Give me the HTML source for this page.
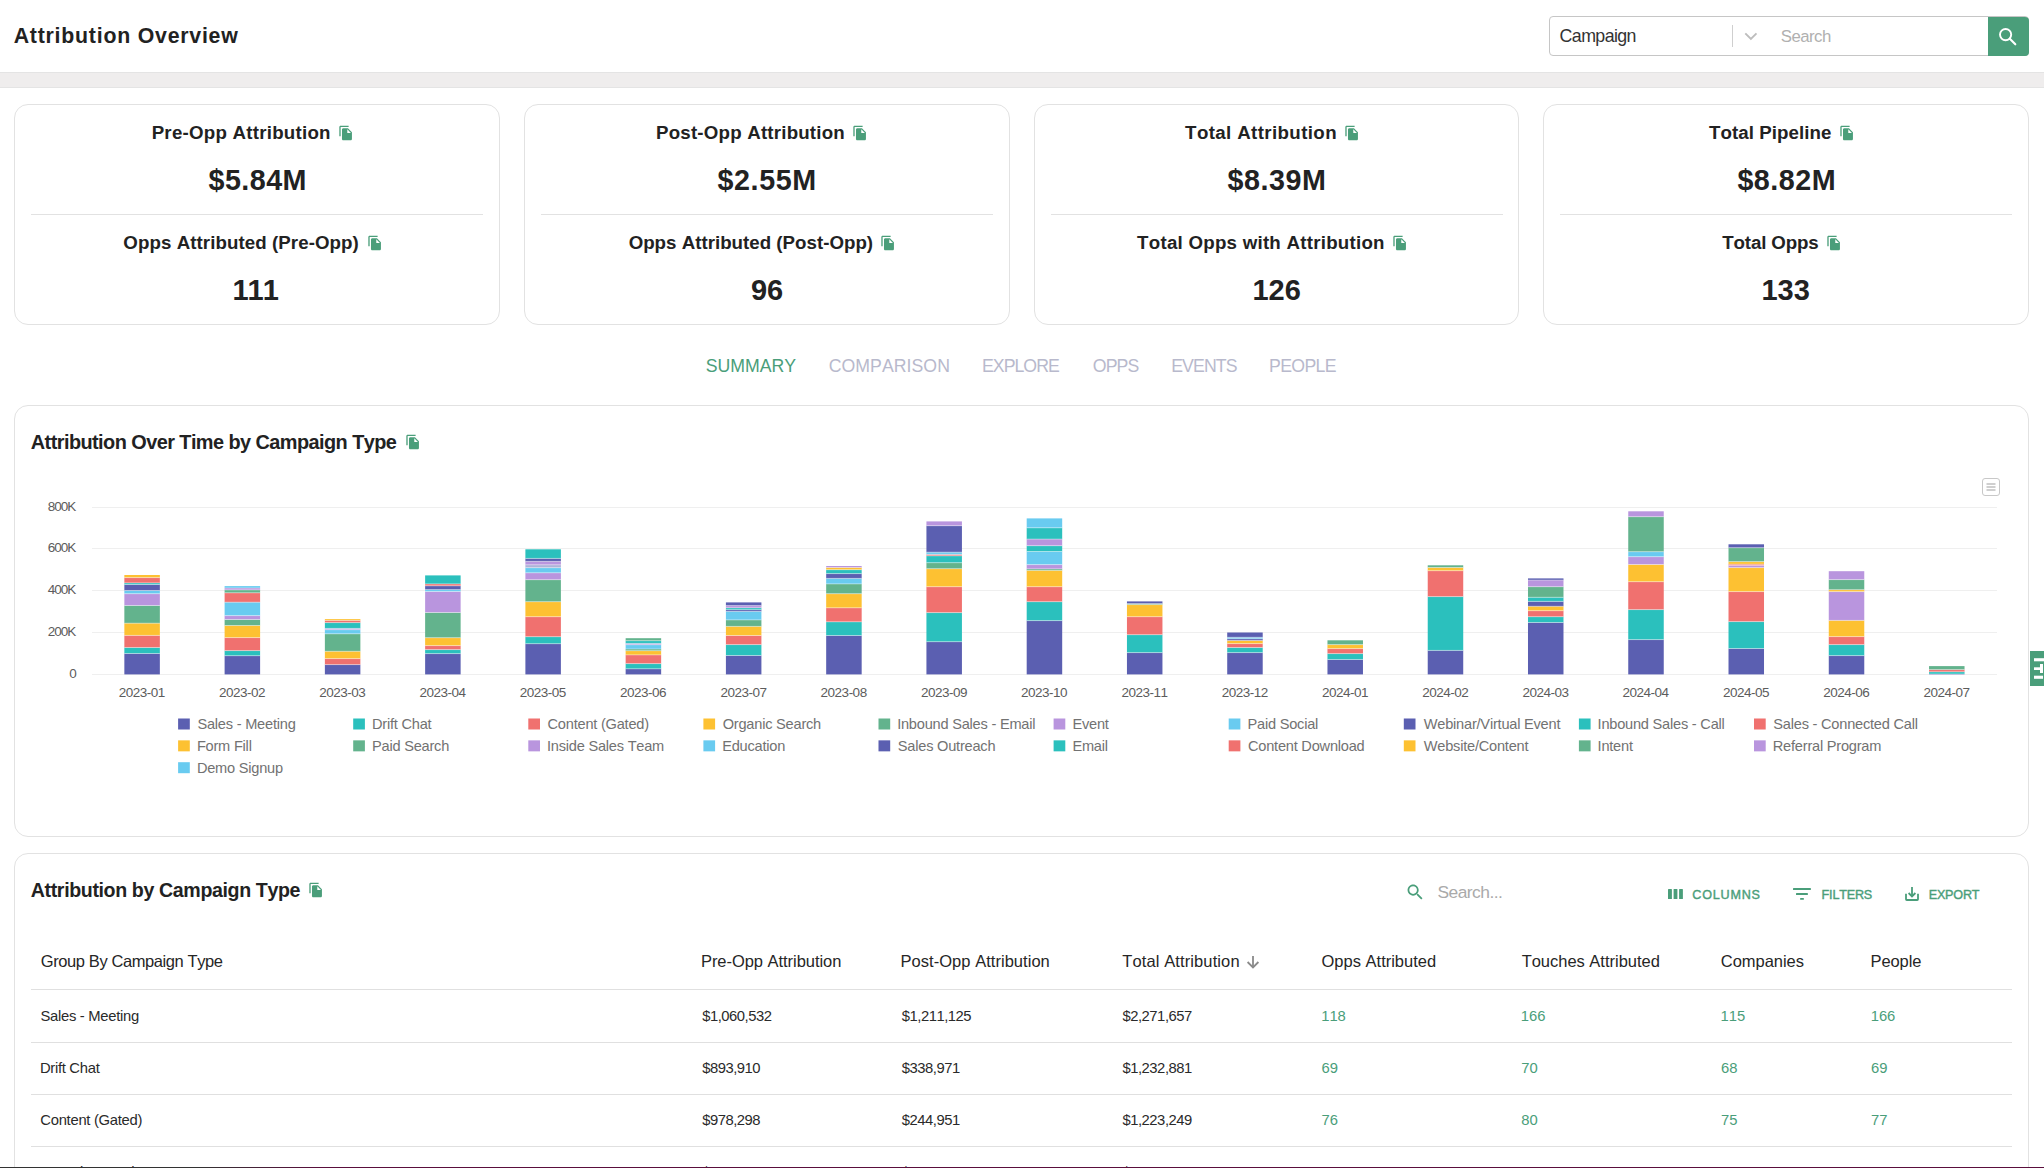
<!DOCTYPE html>
<html><head><meta charset="utf-8">
<style>
*{box-sizing:border-box;margin:0;padding:0}
html,body{width:2044px;height:1168px;overflow:hidden;background:#fff;font-family:"Liberation Sans",sans-serif;color:#222}
.t{position:absolute;line-height:0;white-space:nowrap;font-kerning:none}
.a{position:absolute;display:block}
.card{position:absolute;top:104px;width:486px;height:221px;border:1px solid #e2e2e2;border-radius:14px;background:#fff}
.div{position:absolute;top:214px;height:1px;background:#e2e2e2}
</style></head><body>
<div class="a" style="left:0;top:72px;width:2044px;height:16px;background:#efeded;border-top:1px solid #e4e4e4;border-bottom:1px solid #e4e4e4"></div>
<div class="t" style="left:13.67px;top:36.25px;font-size:21.3px;font-weight:bold;color:#222;letter-spacing:0.774px;">Attribution Overview</div>
<div class="a" style="left:1549px;top:16px;width:480px;height:40px;border:1px solid #c6c6c6;border-radius:4px;background:#fff"></div>
<div class="t" style="left:1559.60px;top:36.07px;font-size:17.8px;font-weight:normal;color:#333;letter-spacing:-0.596px;">Campaign</div>
<div class="a" style="left:1732px;top:25px;width:1px;height:21.5px;background:#cfcfcf"></div>
<svg class="a" style="left:1743px;top:31px" width="16" height="11" viewBox="0 0 16 11"><path d="M2.3 2.3 L7.9 7.9 L13.5 2.3" fill="none" stroke="#bdbdbd" stroke-width="1.9"/></svg>
<div class="t" style="left:1780.74px;top:37.02px;font-size:16.8px;font-weight:normal;color:#b0b0b0;letter-spacing:-0.535px;">Search</div>
<div class="a" style="left:1988px;top:17px;width:40.5px;height:39px;background:#4a9e7a;border-radius:0 4px 4px 0"></div>
<svg class="a" style="left:1997px;top:26px" width="21" height="21" viewBox="0 0 21 21"><circle cx="8.6" cy="8.6" r="5.6" fill="none" stroke="#fff" stroke-width="1.9"/><path d="M12.8 12.8 L18.3 18.3" stroke="#fff" stroke-width="2.1" stroke-linecap="round"/></svg>
<div class="card" style="left:14px;width:486px"></div>
<div class="div" style="left:31px;width:452px"></div>
<div class="t" style="left:151.65px;top:133.46px;font-size:18.7px;font-weight:bold;color:#222;letter-spacing:0.250px;">Pre-Opp Attribution</div>
<svg class="a" style="left:338.07px;top:124.94px" width="15.93" height="15.93" viewBox="0 0 24 24"><path fill="#4a9e7a" d="M16 1H4c-1.1 0-2 .9-2 2v14h2V3h12V1zm-1 4l6 6v10c0 1.1-.9 2-2 2H7.99C6.89 23 6 22.1 6 21l.01-14c0-1.1.89-2 1.99-2h7zm-1 7h5.5L14 6.5V12z"/></svg>
<div class="t" style="left:123.33px;top:243.36px;font-size:18.7px;font-weight:bold;color:#222;letter-spacing:0.078px;">Opps Attributed (Pre-Opp)</div>
<svg class="a" style="left:366.67px;top:234.84px" width="15.93" height="15.93" viewBox="0 0 24 24"><path fill="#4a9e7a" d="M16 1H4c-1.1 0-2 .9-2 2v14h2V3h12V1zm-1 4l6 6v10c0 1.1-.9 2-2 2H7.99C6.89 23 6 22.1 6 21l.01-14c0-1.1.89-2 1.99-2h7zm-1 7h5.5L14 6.5V12z"/></svg>
<div class="t" style="left:208.52px;top:179.86px;font-size:28.7px;font-weight:bold;color:#222;letter-spacing:0.454px;">$5.84M</div>
<div class="t" style="left:232.57px;top:289.65px;font-size:29px;font-weight:bold;color:#222;letter-spacing:-1.076px;">111</div>
<div class="card" style="left:524px;width:486px"></div>
<div class="div" style="left:541px;width:452px"></div>
<div class="t" style="left:656.05px;top:133.46px;font-size:18.7px;font-weight:bold;color:#222;letter-spacing:0.207px;">Post-Opp Attribution</div>
<svg class="a" style="left:852.27px;top:124.94px" width="15.93" height="15.93" viewBox="0 0 24 24"><path fill="#4a9e7a" d="M16 1H4c-1.1 0-2 .9-2 2v14h2V3h12V1zm-1 4l6 6v10c0 1.1-.9 2-2 2H7.99C6.89 23 6 22.1 6 21l.01-14c0-1.1.89-2 1.99-2h7zm-1 7h5.5L14 6.5V12z"/></svg>
<div class="t" style="left:628.63px;top:243.36px;font-size:18.7px;font-weight:bold;color:#222;letter-spacing:0.020px;">Opps Attributed (Post-Opp)</div>
<svg class="a" style="left:880.47px;top:234.84px" width="15.93" height="15.93" viewBox="0 0 24 24"><path fill="#4a9e7a" d="M16 1H4c-1.1 0-2 .9-2 2v14h2V3h12V1zm-1 4l6 6v10c0 1.1-.9 2-2 2H7.99C6.89 23 6 22.1 6 21l.01-14c0-1.1.89-2 1.99-2h7zm-1 7h5.5L14 6.5V12z"/></svg>
<div class="t" style="left:717.52px;top:179.86px;font-size:28.7px;font-weight:bold;color:#222;letter-spacing:0.594px;">$2.55M</div>
<div class="t" style="left:750.89px;top:289.65px;font-size:29px;font-weight:bold;color:#222;letter-spacing:0.000px;">96</div>
<div class="card" style="left:1034px;width:485px"></div>
<div class="div" style="left:1051px;width:452px"></div>
<div class="t" style="left:1185.09px;top:133.46px;font-size:18.7px;font-weight:bold;color:#222;letter-spacing:0.385px;">Total Attribution</div>
<svg class="a" style="left:1343.97px;top:124.94px" width="15.93" height="15.93" viewBox="0 0 24 24"><path fill="#4a9e7a" d="M16 1H4c-1.1 0-2 .9-2 2v14h2V3h12V1zm-1 4l6 6v10c0 1.1-.9 2-2 2H7.99C6.89 23 6 22.1 6 21l.01-14c0-1.1.89-2 1.99-2h7zm-1 7h5.5L14 6.5V12z"/></svg>
<div class="t" style="left:1137.09px;top:243.36px;font-size:18.7px;font-weight:bold;color:#222;letter-spacing:0.253px;">Total Opps with Attribution</div>
<svg class="a" style="left:1391.97px;top:234.84px" width="15.93" height="15.93" viewBox="0 0 24 24"><path fill="#4a9e7a" d="M16 1H4c-1.1 0-2 .9-2 2v14h2V3h12V1zm-1 4l6 6v10c0 1.1-.9 2-2 2H7.99C6.89 23 6 22.1 6 21l.01-14c0-1.1.89-2 1.99-2h7zm-1 7h5.5L14 6.5V12z"/></svg>
<div class="t" style="left:1227.52px;top:179.86px;font-size:28.7px;font-weight:bold;color:#222;letter-spacing:0.534px;">$8.39M</div>
<div class="t" style="left:1252.42px;top:289.65px;font-size:29px;font-weight:bold;color:#222;letter-spacing:0.000px;">126</div>
<div class="card" style="left:1543px;width:486px"></div>
<div class="div" style="left:1560px;width:452px"></div>
<div class="t" style="left:1708.99px;top:133.46px;font-size:18.7px;font-weight:bold;color:#222;letter-spacing:0.075px;">Total Pipeline</div>
<svg class="a" style="left:1839.47px;top:124.94px" width="15.93" height="15.93" viewBox="0 0 24 24"><path fill="#4a9e7a" d="M16 1H4c-1.1 0-2 .9-2 2v14h2V3h12V1zm-1 4l6 6v10c0 1.1-.9 2-2 2H7.99C6.89 23 6 22.1 6 21l.01-14c0-1.1.89-2 1.99-2h7zm-1 7h5.5L14 6.5V12z"/></svg>
<div class="t" style="left:1722.29px;top:243.36px;font-size:18.7px;font-weight:bold;color:#222;letter-spacing:-0.142px;">Total Opps</div>
<svg class="a" style="left:1826.17px;top:234.84px" width="15.93" height="15.93" viewBox="0 0 24 24"><path fill="#4a9e7a" d="M16 1H4c-1.1 0-2 .9-2 2v14h2V3h12V1zm-1 4l6 6v10c0 1.1-.9 2-2 2H7.99C6.89 23 6 22.1 6 21l.01-14c0-1.1.89-2 1.99-2h7zm-1 7h5.5L14 6.5V12z"/></svg>
<div class="t" style="left:1737.42px;top:179.86px;font-size:28.7px;font-weight:bold;color:#222;letter-spacing:0.494px;">$8.82M</div>
<div class="t" style="left:1761.42px;top:289.65px;font-size:29px;font-weight:bold;color:#222;letter-spacing:0.000px;">133</div>
<div class="t" style="left:705.80px;top:365.70px;font-size:17.7px;font-weight:normal;color:#4a9e7a;letter-spacing:-0.013px;">SUMMARY</div>
<div class="t" style="left:828.70px;top:365.70px;font-size:17.7px;font-weight:normal;color:#b8b9cc;letter-spacing:0.042px;">COMPARISON</div>
<div class="t" style="left:981.95px;top:365.70px;font-size:17.7px;font-weight:normal;color:#b8b9cc;letter-spacing:-0.951px;">EXPLORE</div>
<div class="t" style="left:1092.76px;top:365.70px;font-size:17.7px;font-weight:normal;color:#b8b9cc;letter-spacing:-0.878px;">OPPS</div>
<div class="t" style="left:1171.15px;top:365.70px;font-size:17.7px;font-weight:normal;color:#b8b9cc;letter-spacing:-0.871px;">EVENTS</div>
<div class="t" style="left:1269.05px;top:365.70px;font-size:17.7px;font-weight:normal;color:#b8b9cc;letter-spacing:-0.644px;">PEOPLE</div>
<div class="a" style="left:14px;top:405px;width:2015px;height:432px;border:1px solid #e2e2e2;border-radius:14px;background:#fff"></div>
<div class="t" style="left:30.80px;top:442.04px;font-size:19.9px;font-weight:bold;color:#222;letter-spacing:-0.560px;">Attribution Over Time by Campaign Type</div>
<svg class="a" style="left:404.87px;top:433.94px" width="15.93" height="15.93" viewBox="0 0 24 24"><path fill="#4a9e7a" d="M16 1H4c-1.1 0-2 .9-2 2v14h2V3h12V1zm-1 4l6 6v10c0 1.1-.9 2-2 2H7.99C6.89 23 6 22.1 6 21l.01-14c0-1.1.89-2 1.99-2h7zm-1 7h5.5L14 6.5V12z"/></svg>
<svg class="a" style="left:0;top:0" width="2044" height="1168" viewBox="0 0 2044 1168">
<rect x="92" y="674" width="1905" height="1" fill="#efefef"/>
<rect x="92" y="632" width="1905" height="1" fill="#efefef"/>
<rect x="92" y="590" width="1905" height="1" fill="#efefef"/>
<rect x="92" y="548" width="1905" height="1" fill="#efefef"/>
<rect x="92" y="507" width="1905" height="1" fill="#efefef"/>
<rect x="124.35" y="653.50" width="35.5" height="20.90" fill="#5b5fb1"/>
<rect x="124.35" y="647.50" width="35.5" height="6.00" fill="#2bc0bd"/>
<rect x="124.35" y="635.40" width="35.5" height="12.10" fill="#f0716f"/>
<rect x="124.35" y="623.20" width="35.5" height="12.20" fill="#fdc132"/>
<rect x="124.35" y="605.50" width="35.5" height="17.70" fill="#63b38d"/>
<rect x="124.35" y="593.70" width="35.5" height="11.80" fill="#b995de"/>
<rect x="124.35" y="590.50" width="35.5" height="3.20" fill="#69cbf0"/>
<rect x="124.35" y="584.50" width="35.5" height="6.00" fill="#5b5fb1"/>
<rect x="124.35" y="582.90" width="35.5" height="1.60" fill="#2bc0bd"/>
<rect x="124.35" y="577.60" width="35.5" height="5.30" fill="#f0716f"/>
<rect x="124.35" y="575.00" width="35.5" height="2.60" fill="#fdc132"/>
<rect x="124.35" y="653.00" width="35.5" height="1" fill="#fff" opacity="0.4"/>
<rect x="124.35" y="647.00" width="35.5" height="1" fill="#fff" opacity="0.4"/>
<rect x="124.35" y="634.90" width="35.5" height="1" fill="#fff" opacity="0.4"/>
<rect x="124.35" y="622.70" width="35.5" height="1" fill="#fff" opacity="0.4"/>
<rect x="124.35" y="605.00" width="35.5" height="1" fill="#fff" opacity="0.4"/>
<rect x="124.35" y="593.20" width="35.5" height="1" fill="#fff" opacity="0.4"/>
<rect x="124.35" y="590.00" width="35.5" height="1" fill="#fff" opacity="0.4"/>
<rect x="124.35" y="584.00" width="35.5" height="1" fill="#fff" opacity="0.4"/>
<rect x="124.35" y="582.40" width="35.5" height="1" fill="#fff" opacity="0.4"/>
<rect x="124.35" y="577.10" width="35.5" height="1" fill="#fff" opacity="0.4"/>
<rect x="224.61" y="655.70" width="35.5" height="18.70" fill="#5b5fb1"/>
<rect x="224.61" y="650.60" width="35.5" height="5.10" fill="#2bc0bd"/>
<rect x="224.61" y="637.60" width="35.5" height="13.00" fill="#f0716f"/>
<rect x="224.61" y="625.50" width="35.5" height="12.10" fill="#fdc132"/>
<rect x="224.61" y="619.50" width="35.5" height="6.00" fill="#63b38d"/>
<rect x="224.61" y="615.60" width="35.5" height="3.90" fill="#b995de"/>
<rect x="224.61" y="602.20" width="35.5" height="13.40" fill="#69cbf0"/>
<rect x="224.61" y="592.80" width="35.5" height="9.40" fill="#f0716f"/>
<rect x="224.61" y="589.90" width="35.5" height="2.90" fill="#63b38d"/>
<rect x="224.61" y="588.00" width="35.5" height="1.90" fill="#b995de"/>
<rect x="224.61" y="586.10" width="35.5" height="1.90" fill="#69cbf0"/>
<rect x="224.61" y="655.20" width="35.5" height="1" fill="#fff" opacity="0.4"/>
<rect x="224.61" y="650.10" width="35.5" height="1" fill="#fff" opacity="0.4"/>
<rect x="224.61" y="637.10" width="35.5" height="1" fill="#fff" opacity="0.4"/>
<rect x="224.61" y="625.00" width="35.5" height="1" fill="#fff" opacity="0.4"/>
<rect x="224.61" y="619.00" width="35.5" height="1" fill="#fff" opacity="0.4"/>
<rect x="224.61" y="615.10" width="35.5" height="1" fill="#fff" opacity="0.4"/>
<rect x="224.61" y="601.70" width="35.5" height="1" fill="#fff" opacity="0.4"/>
<rect x="224.61" y="592.30" width="35.5" height="1" fill="#fff" opacity="0.4"/>
<rect x="224.61" y="589.40" width="35.5" height="1" fill="#fff" opacity="0.4"/>
<rect x="224.61" y="587.50" width="35.5" height="1" fill="#fff" opacity="0.4"/>
<rect x="324.87" y="664.60" width="35.5" height="9.80" fill="#5b5fb1"/>
<rect x="324.87" y="658.60" width="35.5" height="6.00" fill="#f0716f"/>
<rect x="324.87" y="651.30" width="35.5" height="7.30" fill="#fdc132"/>
<rect x="324.87" y="633.80" width="35.5" height="17.50" fill="#63b38d"/>
<rect x="324.87" y="629.70" width="35.5" height="4.10" fill="#69cbf0"/>
<rect x="324.87" y="628.40" width="35.5" height="1.30" fill="#b995de"/>
<rect x="324.87" y="622.60" width="35.5" height="5.80" fill="#2bc0bd"/>
<rect x="324.87" y="620.40" width="35.5" height="2.20" fill="#f0716f"/>
<rect x="324.87" y="619.10" width="35.5" height="1.30" fill="#fdc132"/>
<rect x="324.87" y="664.10" width="35.5" height="1" fill="#fff" opacity="0.4"/>
<rect x="324.87" y="658.10" width="35.5" height="1" fill="#fff" opacity="0.4"/>
<rect x="324.87" y="650.80" width="35.5" height="1" fill="#fff" opacity="0.4"/>
<rect x="324.87" y="633.30" width="35.5" height="1" fill="#fff" opacity="0.4"/>
<rect x="324.87" y="629.20" width="35.5" height="1" fill="#fff" opacity="0.4"/>
<rect x="324.87" y="627.90" width="35.5" height="1" fill="#fff" opacity="0.4"/>
<rect x="324.87" y="622.10" width="35.5" height="1" fill="#fff" opacity="0.4"/>
<rect x="324.87" y="619.90" width="35.5" height="1" fill="#fff" opacity="0.4"/>
<rect x="425.13" y="653.60" width="35.5" height="20.80" fill="#5b5fb1"/>
<rect x="425.13" y="649.60" width="35.5" height="4.00" fill="#2bc0bd"/>
<rect x="425.13" y="645.60" width="35.5" height="4.00" fill="#f0716f"/>
<rect x="425.13" y="637.70" width="35.5" height="7.90" fill="#fdc132"/>
<rect x="425.13" y="612.50" width="35.5" height="25.20" fill="#63b38d"/>
<rect x="425.13" y="591.50" width="35.5" height="21.00" fill="#b995de"/>
<rect x="425.13" y="589.60" width="35.5" height="1.90" fill="#69cbf0"/>
<rect x="425.13" y="585.80" width="35.5" height="3.80" fill="#5b5fb1"/>
<rect x="425.13" y="583.90" width="35.5" height="1.90" fill="#f0716f"/>
<rect x="425.13" y="575.40" width="35.5" height="8.50" fill="#2bc0bd"/>
<rect x="425.13" y="653.10" width="35.5" height="1" fill="#fff" opacity="0.4"/>
<rect x="425.13" y="649.10" width="35.5" height="1" fill="#fff" opacity="0.4"/>
<rect x="425.13" y="645.10" width="35.5" height="1" fill="#fff" opacity="0.4"/>
<rect x="425.13" y="637.20" width="35.5" height="1" fill="#fff" opacity="0.4"/>
<rect x="425.13" y="612.00" width="35.5" height="1" fill="#fff" opacity="0.4"/>
<rect x="425.13" y="591.00" width="35.5" height="1" fill="#fff" opacity="0.4"/>
<rect x="425.13" y="589.10" width="35.5" height="1" fill="#fff" opacity="0.4"/>
<rect x="425.13" y="585.30" width="35.5" height="1" fill="#fff" opacity="0.4"/>
<rect x="425.13" y="583.40" width="35.5" height="1" fill="#fff" opacity="0.4"/>
<rect x="525.39" y="643.70" width="35.5" height="30.70" fill="#5b5fb1"/>
<rect x="525.39" y="636.70" width="35.5" height="7.00" fill="#2bc0bd"/>
<rect x="525.39" y="616.70" width="35.5" height="20.00" fill="#f0716f"/>
<rect x="525.39" y="601.70" width="35.5" height="15.00" fill="#fdc132"/>
<rect x="525.39" y="579.70" width="35.5" height="22.00" fill="#63b38d"/>
<rect x="525.39" y="572.80" width="35.5" height="6.90" fill="#b995de"/>
<rect x="525.39" y="567.70" width="35.5" height="5.10" fill="#69cbf0"/>
<rect x="525.39" y="564.80" width="35.5" height="2.90" fill="#aeb2d8"/>
<rect x="525.39" y="561.40" width="35.5" height="3.40" fill="#b995de"/>
<rect x="525.39" y="558.40" width="35.5" height="3.00" fill="#5b5fb1"/>
<rect x="525.39" y="549.30" width="35.5" height="9.10" fill="#2bc0bd"/>
<rect x="525.39" y="643.20" width="35.5" height="1" fill="#fff" opacity="0.4"/>
<rect x="525.39" y="636.20" width="35.5" height="1" fill="#fff" opacity="0.4"/>
<rect x="525.39" y="616.20" width="35.5" height="1" fill="#fff" opacity="0.4"/>
<rect x="525.39" y="601.20" width="35.5" height="1" fill="#fff" opacity="0.4"/>
<rect x="525.39" y="579.20" width="35.5" height="1" fill="#fff" opacity="0.4"/>
<rect x="525.39" y="572.30" width="35.5" height="1" fill="#fff" opacity="0.4"/>
<rect x="525.39" y="567.20" width="35.5" height="1" fill="#fff" opacity="0.4"/>
<rect x="525.39" y="564.30" width="35.5" height="1" fill="#fff" opacity="0.4"/>
<rect x="525.39" y="560.90" width="35.5" height="1" fill="#fff" opacity="0.4"/>
<rect x="525.39" y="557.90" width="35.5" height="1" fill="#fff" opacity="0.4"/>
<rect x="625.65" y="668.80" width="35.5" height="5.60" fill="#5b5fb1"/>
<rect x="625.65" y="663.60" width="35.5" height="5.20" fill="#2bc0bd"/>
<rect x="625.65" y="654.90" width="35.5" height="8.70" fill="#f0716f"/>
<rect x="625.65" y="650.70" width="35.5" height="4.20" fill="#fdc132"/>
<rect x="625.65" y="649.00" width="35.5" height="1.70" fill="#63b38d"/>
<rect x="625.65" y="644.70" width="35.5" height="4.30" fill="#69cbf0"/>
<rect x="625.65" y="643.40" width="35.5" height="1.30" fill="#b995de"/>
<rect x="625.65" y="640.70" width="35.5" height="2.70" fill="#2bc0bd"/>
<rect x="625.65" y="638.20" width="35.5" height="2.50" fill="#63b38d"/>
<rect x="625.65" y="668.30" width="35.5" height="1" fill="#fff" opacity="0.4"/>
<rect x="625.65" y="663.10" width="35.5" height="1" fill="#fff" opacity="0.4"/>
<rect x="625.65" y="654.40" width="35.5" height="1" fill="#fff" opacity="0.4"/>
<rect x="625.65" y="650.20" width="35.5" height="1" fill="#fff" opacity="0.4"/>
<rect x="625.65" y="648.50" width="35.5" height="1" fill="#fff" opacity="0.4"/>
<rect x="625.65" y="644.20" width="35.5" height="1" fill="#fff" opacity="0.4"/>
<rect x="625.65" y="642.90" width="35.5" height="1" fill="#fff" opacity="0.4"/>
<rect x="625.65" y="640.20" width="35.5" height="1" fill="#fff" opacity="0.4"/>
<rect x="725.91" y="655.50" width="35.5" height="18.90" fill="#5b5fb1"/>
<rect x="725.91" y="644.60" width="35.5" height="10.90" fill="#2bc0bd"/>
<rect x="725.91" y="635.50" width="35.5" height="9.10" fill="#f0716f"/>
<rect x="725.91" y="626.40" width="35.5" height="9.10" fill="#fdc132"/>
<rect x="725.91" y="619.90" width="35.5" height="6.50" fill="#63b38d"/>
<rect x="725.91" y="611.40" width="35.5" height="8.50" fill="#69cbf0"/>
<rect x="725.91" y="609.70" width="35.5" height="1.70" fill="#5b5fb1"/>
<rect x="725.91" y="607.80" width="35.5" height="1.90" fill="#2bc0bd"/>
<rect x="725.91" y="605.60" width="35.5" height="2.20" fill="#b995de"/>
<rect x="725.91" y="602.40" width="35.5" height="3.20" fill="#5b5fb1"/>
<rect x="725.91" y="655.00" width="35.5" height="1" fill="#fff" opacity="0.4"/>
<rect x="725.91" y="644.10" width="35.5" height="1" fill="#fff" opacity="0.4"/>
<rect x="725.91" y="635.00" width="35.5" height="1" fill="#fff" opacity="0.4"/>
<rect x="725.91" y="625.90" width="35.5" height="1" fill="#fff" opacity="0.4"/>
<rect x="725.91" y="619.40" width="35.5" height="1" fill="#fff" opacity="0.4"/>
<rect x="725.91" y="610.90" width="35.5" height="1" fill="#fff" opacity="0.4"/>
<rect x="725.91" y="609.20" width="35.5" height="1" fill="#fff" opacity="0.4"/>
<rect x="725.91" y="607.30" width="35.5" height="1" fill="#fff" opacity="0.4"/>
<rect x="725.91" y="605.10" width="35.5" height="1" fill="#fff" opacity="0.4"/>
<rect x="826.17" y="635.50" width="35.5" height="38.90" fill="#5b5fb1"/>
<rect x="826.17" y="621.80" width="35.5" height="13.70" fill="#2bc0bd"/>
<rect x="826.17" y="607.80" width="35.5" height="14.00" fill="#f0716f"/>
<rect x="826.17" y="593.70" width="35.5" height="14.10" fill="#fdc132"/>
<rect x="826.17" y="583.90" width="35.5" height="9.80" fill="#63b38d"/>
<rect x="826.17" y="578.40" width="35.5" height="5.50" fill="#69cbf0"/>
<rect x="826.17" y="573.60" width="35.5" height="4.80" fill="#5b5fb1"/>
<rect x="826.17" y="569.70" width="35.5" height="3.90" fill="#2bc0bd"/>
<rect x="826.17" y="567.50" width="35.5" height="2.20" fill="#fdc132"/>
<rect x="826.17" y="566.00" width="35.5" height="1.50" fill="#b995de"/>
<rect x="826.17" y="635.00" width="35.5" height="1" fill="#fff" opacity="0.4"/>
<rect x="826.17" y="621.30" width="35.5" height="1" fill="#fff" opacity="0.4"/>
<rect x="826.17" y="607.30" width="35.5" height="1" fill="#fff" opacity="0.4"/>
<rect x="826.17" y="593.20" width="35.5" height="1" fill="#fff" opacity="0.4"/>
<rect x="826.17" y="583.40" width="35.5" height="1" fill="#fff" opacity="0.4"/>
<rect x="826.17" y="577.90" width="35.5" height="1" fill="#fff" opacity="0.4"/>
<rect x="826.17" y="573.10" width="35.5" height="1" fill="#fff" opacity="0.4"/>
<rect x="826.17" y="569.20" width="35.5" height="1" fill="#fff" opacity="0.4"/>
<rect x="826.17" y="567.00" width="35.5" height="1" fill="#fff" opacity="0.4"/>
<rect x="926.43" y="641.70" width="35.5" height="32.70" fill="#5b5fb1"/>
<rect x="926.43" y="612.60" width="35.5" height="29.10" fill="#2bc0bd"/>
<rect x="926.43" y="586.70" width="35.5" height="25.90" fill="#f0716f"/>
<rect x="926.43" y="568.70" width="35.5" height="18.00" fill="#fdc132"/>
<rect x="926.43" y="562.70" width="35.5" height="6.00" fill="#63b38d"/>
<rect x="926.43" y="555.80" width="35.5" height="6.90" fill="#2bc0bd"/>
<rect x="926.43" y="554.40" width="35.5" height="1.40" fill="#f0716f"/>
<rect x="926.43" y="552.20" width="35.5" height="2.20" fill="#69cbf0"/>
<rect x="926.43" y="525.70" width="35.5" height="26.50" fill="#5b5fb1"/>
<rect x="926.43" y="521.40" width="35.5" height="4.30" fill="#b995de"/>
<rect x="926.43" y="641.20" width="35.5" height="1" fill="#fff" opacity="0.4"/>
<rect x="926.43" y="612.10" width="35.5" height="1" fill="#fff" opacity="0.4"/>
<rect x="926.43" y="586.20" width="35.5" height="1" fill="#fff" opacity="0.4"/>
<rect x="926.43" y="568.20" width="35.5" height="1" fill="#fff" opacity="0.4"/>
<rect x="926.43" y="562.20" width="35.5" height="1" fill="#fff" opacity="0.4"/>
<rect x="926.43" y="555.30" width="35.5" height="1" fill="#fff" opacity="0.4"/>
<rect x="926.43" y="553.90" width="35.5" height="1" fill="#fff" opacity="0.4"/>
<rect x="926.43" y="551.70" width="35.5" height="1" fill="#fff" opacity="0.4"/>
<rect x="926.43" y="525.20" width="35.5" height="1" fill="#fff" opacity="0.4"/>
<rect x="1026.69" y="620.60" width="35.5" height="53.80" fill="#5b5fb1"/>
<rect x="1026.69" y="601.70" width="35.5" height="18.90" fill="#2bc0bd"/>
<rect x="1026.69" y="586.70" width="35.5" height="15.00" fill="#f0716f"/>
<rect x="1026.69" y="570.40" width="35.5" height="16.30" fill="#fdc132"/>
<rect x="1026.69" y="568.90" width="35.5" height="1.50" fill="#63b38d"/>
<rect x="1026.69" y="564.60" width="35.5" height="4.30" fill="#b995de"/>
<rect x="1026.69" y="551.50" width="35.5" height="13.10" fill="#69cbf0"/>
<rect x="1026.69" y="545.70" width="35.5" height="5.80" fill="#2bc0bd"/>
<rect x="1026.69" y="539.10" width="35.5" height="6.60" fill="#b995de"/>
<rect x="1026.69" y="527.80" width="35.5" height="11.30" fill="#2bc0bd"/>
<rect x="1026.69" y="518.40" width="35.5" height="9.40" fill="#69cbf0"/>
<rect x="1026.69" y="620.10" width="35.5" height="1" fill="#fff" opacity="0.4"/>
<rect x="1026.69" y="601.20" width="35.5" height="1" fill="#fff" opacity="0.4"/>
<rect x="1026.69" y="586.20" width="35.5" height="1" fill="#fff" opacity="0.4"/>
<rect x="1026.69" y="569.90" width="35.5" height="1" fill="#fff" opacity="0.4"/>
<rect x="1026.69" y="568.40" width="35.5" height="1" fill="#fff" opacity="0.4"/>
<rect x="1026.69" y="564.10" width="35.5" height="1" fill="#fff" opacity="0.4"/>
<rect x="1026.69" y="551.00" width="35.5" height="1" fill="#fff" opacity="0.4"/>
<rect x="1026.69" y="545.20" width="35.5" height="1" fill="#fff" opacity="0.4"/>
<rect x="1026.69" y="538.60" width="35.5" height="1" fill="#fff" opacity="0.4"/>
<rect x="1026.69" y="527.30" width="35.5" height="1" fill="#fff" opacity="0.4"/>
<rect x="1126.95" y="652.60" width="35.5" height="21.80" fill="#5b5fb1"/>
<rect x="1126.95" y="634.70" width="35.5" height="17.90" fill="#2bc0bd"/>
<rect x="1126.95" y="616.70" width="35.5" height="18.00" fill="#f0716f"/>
<rect x="1126.95" y="604.60" width="35.5" height="12.10" fill="#fdc132"/>
<rect x="1126.95" y="603.60" width="35.5" height="1.00" fill="#63b38d"/>
<rect x="1126.95" y="601.40" width="35.5" height="2.20" fill="#5b5fb1"/>
<rect x="1126.95" y="652.10" width="35.5" height="1" fill="#fff" opacity="0.4"/>
<rect x="1126.95" y="634.20" width="35.5" height="1" fill="#fff" opacity="0.4"/>
<rect x="1126.95" y="616.20" width="35.5" height="1" fill="#fff" opacity="0.4"/>
<rect x="1126.95" y="604.10" width="35.5" height="1" fill="#fff" opacity="0.4"/>
<rect x="1126.95" y="603.10" width="35.5" height="1" fill="#fff" opacity="0.4"/>
<rect x="1227.21" y="652.60" width="35.5" height="21.80" fill="#5b5fb1"/>
<rect x="1227.21" y="647.50" width="35.5" height="5.10" fill="#2bc0bd"/>
<rect x="1227.21" y="643.60" width="35.5" height="3.90" fill="#f0716f"/>
<rect x="1227.21" y="640.50" width="35.5" height="3.10" fill="#fdc132"/>
<rect x="1227.21" y="638.80" width="35.5" height="1.70" fill="#5b5fb1"/>
<rect x="1227.21" y="637.30" width="35.5" height="1.50" fill="#69cbf0"/>
<rect x="1227.21" y="632.50" width="35.5" height="4.80" fill="#5b5fb1"/>
<rect x="1227.21" y="652.10" width="35.5" height="1" fill="#fff" opacity="0.4"/>
<rect x="1227.21" y="647.00" width="35.5" height="1" fill="#fff" opacity="0.4"/>
<rect x="1227.21" y="643.10" width="35.5" height="1" fill="#fff" opacity="0.4"/>
<rect x="1227.21" y="640.00" width="35.5" height="1" fill="#fff" opacity="0.4"/>
<rect x="1227.21" y="638.30" width="35.5" height="1" fill="#fff" opacity="0.4"/>
<rect x="1227.21" y="636.80" width="35.5" height="1" fill="#fff" opacity="0.4"/>
<rect x="1327.47" y="659.50" width="35.5" height="14.90" fill="#5b5fb1"/>
<rect x="1327.47" y="653.60" width="35.5" height="5.90" fill="#2bc0bd"/>
<rect x="1327.47" y="648.60" width="35.5" height="5.00" fill="#f0716f"/>
<rect x="1327.47" y="644.60" width="35.5" height="4.00" fill="#fdc132"/>
<rect x="1327.47" y="640.30" width="35.5" height="4.30" fill="#63b38d"/>
<rect x="1327.47" y="659.00" width="35.5" height="1" fill="#fff" opacity="0.4"/>
<rect x="1327.47" y="653.10" width="35.5" height="1" fill="#fff" opacity="0.4"/>
<rect x="1327.47" y="648.10" width="35.5" height="1" fill="#fff" opacity="0.4"/>
<rect x="1327.47" y="644.10" width="35.5" height="1" fill="#fff" opacity="0.4"/>
<rect x="1427.73" y="650.40" width="35.5" height="24.00" fill="#5b5fb1"/>
<rect x="1427.73" y="596.60" width="35.5" height="53.80" fill="#2bc0bd"/>
<rect x="1427.73" y="570.70" width="35.5" height="25.90" fill="#f0716f"/>
<rect x="1427.73" y="567.50" width="35.5" height="3.20" fill="#fdc132"/>
<rect x="1427.73" y="565.30" width="35.5" height="2.20" fill="#63b38d"/>
<rect x="1427.73" y="649.90" width="35.5" height="1" fill="#fff" opacity="0.4"/>
<rect x="1427.73" y="596.10" width="35.5" height="1" fill="#fff" opacity="0.4"/>
<rect x="1427.73" y="570.20" width="35.5" height="1" fill="#fff" opacity="0.4"/>
<rect x="1427.73" y="567.00" width="35.5" height="1" fill="#fff" opacity="0.4"/>
<rect x="1527.99" y="622.50" width="35.5" height="51.90" fill="#5b5fb1"/>
<rect x="1527.99" y="616.70" width="35.5" height="5.80" fill="#2bc0bd"/>
<rect x="1527.99" y="610.70" width="35.5" height="6.00" fill="#f0716f"/>
<rect x="1527.99" y="606.30" width="35.5" height="4.40" fill="#fdc132"/>
<rect x="1527.99" y="601.40" width="35.5" height="4.90" fill="#5b5fb1"/>
<rect x="1527.99" y="597.30" width="35.5" height="4.10" fill="#2bc0bd"/>
<rect x="1527.99" y="586.70" width="35.5" height="10.60" fill="#63b38d"/>
<rect x="1527.99" y="580.10" width="35.5" height="6.60" fill="#b995de"/>
<rect x="1527.99" y="578.40" width="35.5" height="1.70" fill="#5b5fb1"/>
<rect x="1527.99" y="622.00" width="35.5" height="1" fill="#fff" opacity="0.4"/>
<rect x="1527.99" y="616.20" width="35.5" height="1" fill="#fff" opacity="0.4"/>
<rect x="1527.99" y="610.20" width="35.5" height="1" fill="#fff" opacity="0.4"/>
<rect x="1527.99" y="605.80" width="35.5" height="1" fill="#fff" opacity="0.4"/>
<rect x="1527.99" y="600.90" width="35.5" height="1" fill="#fff" opacity="0.4"/>
<rect x="1527.99" y="596.80" width="35.5" height="1" fill="#fff" opacity="0.4"/>
<rect x="1527.99" y="586.20" width="35.5" height="1" fill="#fff" opacity="0.4"/>
<rect x="1527.99" y="579.60" width="35.5" height="1" fill="#fff" opacity="0.4"/>
<rect x="1628.25" y="639.60" width="35.5" height="34.80" fill="#5b5fb1"/>
<rect x="1628.25" y="609.60" width="35.5" height="30.00" fill="#2bc0bd"/>
<rect x="1628.25" y="581.70" width="35.5" height="27.90" fill="#f0716f"/>
<rect x="1628.25" y="564.50" width="35.5" height="17.20" fill="#fdc132"/>
<rect x="1628.25" y="556.70" width="35.5" height="7.80" fill="#b995de"/>
<rect x="1628.25" y="551.70" width="35.5" height="5.00" fill="#69cbf0"/>
<rect x="1628.25" y="516.70" width="35.5" height="35.00" fill="#63b38d"/>
<rect x="1628.25" y="511.30" width="35.5" height="5.40" fill="#b995de"/>
<rect x="1628.25" y="639.10" width="35.5" height="1" fill="#fff" opacity="0.4"/>
<rect x="1628.25" y="609.10" width="35.5" height="1" fill="#fff" opacity="0.4"/>
<rect x="1628.25" y="581.20" width="35.5" height="1" fill="#fff" opacity="0.4"/>
<rect x="1628.25" y="564.00" width="35.5" height="1" fill="#fff" opacity="0.4"/>
<rect x="1628.25" y="556.20" width="35.5" height="1" fill="#fff" opacity="0.4"/>
<rect x="1628.25" y="551.20" width="35.5" height="1" fill="#fff" opacity="0.4"/>
<rect x="1628.25" y="516.20" width="35.5" height="1" fill="#fff" opacity="0.4"/>
<rect x="1728.51" y="648.50" width="35.5" height="25.90" fill="#5b5fb1"/>
<rect x="1728.51" y="621.60" width="35.5" height="26.90" fill="#2bc0bd"/>
<rect x="1728.51" y="591.60" width="35.5" height="30.00" fill="#f0716f"/>
<rect x="1728.51" y="567.60" width="35.5" height="24.00" fill="#fdc132"/>
<rect x="1728.51" y="565.40" width="35.5" height="2.20" fill="#b995de"/>
<rect x="1728.51" y="564.20" width="35.5" height="1.20" fill="#f0716f"/>
<rect x="1728.51" y="561.60" width="35.5" height="2.60" fill="#fdc132"/>
<rect x="1728.51" y="547.70" width="35.5" height="13.90" fill="#63b38d"/>
<rect x="1728.51" y="544.30" width="35.5" height="3.40" fill="#5b5fb1"/>
<rect x="1728.51" y="648.00" width="35.5" height="1" fill="#fff" opacity="0.4"/>
<rect x="1728.51" y="621.10" width="35.5" height="1" fill="#fff" opacity="0.4"/>
<rect x="1728.51" y="591.10" width="35.5" height="1" fill="#fff" opacity="0.4"/>
<rect x="1728.51" y="567.10" width="35.5" height="1" fill="#fff" opacity="0.4"/>
<rect x="1728.51" y="564.90" width="35.5" height="1" fill="#fff" opacity="0.4"/>
<rect x="1728.51" y="563.70" width="35.5" height="1" fill="#fff" opacity="0.4"/>
<rect x="1728.51" y="561.10" width="35.5" height="1" fill="#fff" opacity="0.4"/>
<rect x="1728.51" y="547.20" width="35.5" height="1" fill="#fff" opacity="0.4"/>
<rect x="1828.77" y="655.60" width="35.5" height="18.80" fill="#5b5fb1"/>
<rect x="1828.77" y="644.60" width="35.5" height="11.00" fill="#2bc0bd"/>
<rect x="1828.77" y="636.60" width="35.5" height="8.00" fill="#f0716f"/>
<rect x="1828.77" y="620.40" width="35.5" height="16.20" fill="#fdc132"/>
<rect x="1828.77" y="591.60" width="35.5" height="28.80" fill="#b995de"/>
<rect x="1828.77" y="589.70" width="35.5" height="1.90" fill="#fdc132"/>
<rect x="1828.77" y="579.60" width="35.5" height="10.10" fill="#63b38d"/>
<rect x="1828.77" y="571.20" width="35.5" height="8.40" fill="#b995de"/>
<rect x="1828.77" y="655.10" width="35.5" height="1" fill="#fff" opacity="0.4"/>
<rect x="1828.77" y="644.10" width="35.5" height="1" fill="#fff" opacity="0.4"/>
<rect x="1828.77" y="636.10" width="35.5" height="1" fill="#fff" opacity="0.4"/>
<rect x="1828.77" y="619.90" width="35.5" height="1" fill="#fff" opacity="0.4"/>
<rect x="1828.77" y="591.10" width="35.5" height="1" fill="#fff" opacity="0.4"/>
<rect x="1828.77" y="589.20" width="35.5" height="1" fill="#fff" opacity="0.4"/>
<rect x="1828.77" y="579.10" width="35.5" height="1" fill="#fff" opacity="0.4"/>
<rect x="1929.03" y="674.00" width="35.5" height="0.40" fill="#5b5fb1"/>
<rect x="1929.03" y="671.80" width="35.5" height="2.20" fill="#2bc0bd"/>
<rect x="1929.03" y="669.60" width="35.5" height="2.20" fill="#f0716f"/>
<rect x="1929.03" y="666.10" width="35.5" height="3.50" fill="#63b38d"/>
<rect x="1929.03" y="673.50" width="35.5" height="1" fill="#fff" opacity="0.4"/>
<rect x="1929.03" y="671.30" width="35.5" height="1" fill="#fff" opacity="0.4"/>
<rect x="1929.03" y="669.10" width="35.5" height="1" fill="#fff" opacity="0.4"/>
<rect x="178.10" y="718.50" width="11.7" height="11" fill="#5b5fb1"/>
<rect x="353.20" y="718.50" width="11.7" height="11" fill="#2bc0bd"/>
<rect x="528.30" y="718.50" width="11.7" height="11" fill="#f0716f"/>
<rect x="703.40" y="718.50" width="11.7" height="11" fill="#fdc132"/>
<rect x="878.50" y="718.50" width="11.7" height="11" fill="#63b38d"/>
<rect x="1053.60" y="718.50" width="11.7" height="11" fill="#b995de"/>
<rect x="1228.70" y="718.50" width="11.7" height="11" fill="#69cbf0"/>
<rect x="1403.80" y="718.50" width="11.7" height="11" fill="#5b5fb1"/>
<rect x="1578.90" y="718.50" width="11.7" height="11" fill="#2bc0bd"/>
<rect x="1754.00" y="718.50" width="11.7" height="11" fill="#f0716f"/>
<rect x="178.10" y="740.35" width="11.7" height="11" fill="#fdc132"/>
<rect x="353.20" y="740.35" width="11.7" height="11" fill="#63b38d"/>
<rect x="528.30" y="740.35" width="11.7" height="11" fill="#b995de"/>
<rect x="703.40" y="740.35" width="11.7" height="11" fill="#69cbf0"/>
<rect x="878.50" y="740.35" width="11.7" height="11" fill="#5b5fb1"/>
<rect x="1053.60" y="740.35" width="11.7" height="11" fill="#2bc0bd"/>
<rect x="1228.70" y="740.35" width="11.7" height="11" fill="#f0716f"/>
<rect x="1403.80" y="740.35" width="11.7" height="11" fill="#fdc132"/>
<rect x="1578.90" y="740.35" width="11.7" height="11" fill="#63b38d"/>
<rect x="1754.00" y="740.35" width="11.7" height="11" fill="#b995de"/>
<rect x="178.10" y="762.20" width="11.7" height="11" fill="#69cbf0"/>
<rect x="1982.5" y="478.5" width="17" height="17" rx="2.5" fill="#fff" stroke="#c8c8c8" stroke-width="1"/>
<rect x="1986.5" y="483.4" width="9" height="1.2" fill="#b0b0b0"/>
<rect x="1986.5" y="486.4" width="9" height="1.2" fill="#b0b0b0"/>
<rect x="1986.5" y="489.4" width="9" height="1.2" fill="#b0b0b0"/>
</svg>
<div class="t" style="left:69.22px;top:673.88px;font-size:13.5px;font-weight:normal;color:#5c5c5c;letter-spacing:0.000px;">0</div>
<div class="t" style="left:47.64px;top:631.88px;font-size:13.5px;font-weight:normal;color:#5c5c5c;letter-spacing:-0.940px;">200K</div>
<div class="t" style="left:47.64px;top:589.88px;font-size:13.5px;font-weight:normal;color:#5c5c5c;letter-spacing:-0.940px;">400K</div>
<div class="t" style="left:47.64px;top:547.88px;font-size:13.5px;font-weight:normal;color:#5c5c5c;letter-spacing:-0.940px;">600K</div>
<div class="t" style="left:47.64px;top:506.88px;font-size:13.5px;font-weight:normal;color:#5c5c5c;letter-spacing:-0.940px;">800K</div>
<div class="t" style="left:118.82px;top:693.27px;font-size:13.5px;font-weight:normal;color:#5c5c5c;letter-spacing:-0.500px;">2023-01</div>
<div class="t" style="left:219.09px;top:693.27px;font-size:13.5px;font-weight:normal;color:#5c5c5c;letter-spacing:-0.500px;">2023-02</div>
<div class="t" style="left:319.31px;top:693.27px;font-size:13.5px;font-weight:normal;color:#5c5c5c;letter-spacing:-0.500px;">2023-03</div>
<div class="t" style="left:419.47px;top:693.27px;font-size:13.5px;font-weight:normal;color:#5c5c5c;letter-spacing:-0.500px;">2023-04</div>
<div class="t" style="left:519.81px;top:693.27px;font-size:13.5px;font-weight:normal;color:#5c5c5c;letter-spacing:-0.500px;">2023-05</div>
<div class="t" style="left:620.09px;top:693.27px;font-size:13.5px;font-weight:normal;color:#5c5c5c;letter-spacing:-0.500px;">2023-06</div>
<div class="t" style="left:720.39px;top:693.27px;font-size:13.5px;font-weight:normal;color:#5c5c5c;letter-spacing:-0.500px;">2023-07</div>
<div class="t" style="left:820.60px;top:693.27px;font-size:13.5px;font-weight:normal;color:#5c5c5c;letter-spacing:-0.500px;">2023-08</div>
<div class="t" style="left:920.89px;top:693.27px;font-size:13.5px;font-weight:normal;color:#5c5c5c;letter-spacing:-0.500px;">2023-09</div>
<div class="t" style="left:1021.09px;top:693.27px;font-size:13.5px;font-weight:normal;color:#5c5c5c;letter-spacing:-0.500px;">2023-10</div>
<div class="t" style="left:1121.42px;top:693.27px;font-size:13.5px;font-weight:normal;color:#5c5c5c;letter-spacing:-0.500px;">2023-11</div>
<div class="t" style="left:1221.69px;top:693.27px;font-size:13.5px;font-weight:normal;color:#5c5c5c;letter-spacing:-0.500px;">2023-12</div>
<div class="t" style="left:1321.94px;top:693.27px;font-size:13.5px;font-weight:normal;color:#5c5c5c;letter-spacing:-0.500px;">2024-01</div>
<div class="t" style="left:1422.21px;top:693.27px;font-size:13.5px;font-weight:normal;color:#5c5c5c;letter-spacing:-0.500px;">2024-02</div>
<div class="t" style="left:1522.43px;top:693.27px;font-size:13.5px;font-weight:normal;color:#5c5c5c;letter-spacing:-0.500px;">2024-03</div>
<div class="t" style="left:1622.59px;top:693.27px;font-size:13.5px;font-weight:normal;color:#5c5c5c;letter-spacing:-0.500px;">2024-04</div>
<div class="t" style="left:1722.93px;top:693.27px;font-size:13.5px;font-weight:normal;color:#5c5c5c;letter-spacing:-0.500px;">2024-05</div>
<div class="t" style="left:1823.21px;top:693.27px;font-size:13.5px;font-weight:normal;color:#5c5c5c;letter-spacing:-0.500px;">2024-06</div>
<div class="t" style="left:1923.51px;top:693.27px;font-size:13.5px;font-weight:normal;color:#5c5c5c;letter-spacing:-0.500px;">2024-07</div>
<div class="t" style="left:197.44px;top:723.99px;font-size:14.6px;font-weight:normal;color:#727272;letter-spacing:-0.220px;">Sales - Meeting</div>
<div class="t" style="left:372.00px;top:723.99px;font-size:14.6px;font-weight:normal;color:#727272;letter-spacing:-0.220px;">Drift Chat</div>
<div class="t" style="left:547.56px;top:723.99px;font-size:14.6px;font-weight:normal;color:#727272;letter-spacing:-0.220px;">Content (Gated)</div>
<div class="t" style="left:722.71px;top:723.99px;font-size:14.6px;font-weight:normal;color:#727272;letter-spacing:-0.220px;">Organic Search</div>
<div class="t" style="left:897.15px;top:723.99px;font-size:14.6px;font-weight:normal;color:#727272;letter-spacing:-0.220px;">Inbound Sales - Email</div>
<div class="t" style="left:1072.40px;top:723.99px;font-size:14.6px;font-weight:normal;color:#727272;letter-spacing:-0.220px;">Event</div>
<div class="t" style="left:1247.50px;top:723.99px;font-size:14.6px;font-weight:normal;color:#727272;letter-spacing:-0.220px;">Paid Social</div>
<div class="t" style="left:1423.74px;top:723.99px;font-size:14.6px;font-weight:normal;color:#727272;letter-spacing:-0.220px;">Webinar/Virtual Event</div>
<div class="t" style="left:1597.55px;top:723.99px;font-size:14.6px;font-weight:normal;color:#727272;letter-spacing:-0.220px;">Inbound Sales - Call</div>
<div class="t" style="left:1773.34px;top:723.99px;font-size:14.6px;font-weight:normal;color:#727272;letter-spacing:-0.220px;">Sales - Connected Call</div>
<div class="t" style="left:196.90px;top:745.84px;font-size:14.6px;font-weight:normal;color:#727272;letter-spacing:-0.220px;">Form Fill</div>
<div class="t" style="left:372.00px;top:745.84px;font-size:14.6px;font-weight:normal;color:#727272;letter-spacing:-0.220px;">Paid Search</div>
<div class="t" style="left:546.95px;top:745.84px;font-size:14.6px;font-weight:normal;color:#727272;letter-spacing:-0.220px;">Inside Sales Team</div>
<div class="t" style="left:722.20px;top:745.84px;font-size:14.6px;font-weight:normal;color:#727272;letter-spacing:-0.220px;">Education</div>
<div class="t" style="left:897.84px;top:745.84px;font-size:14.6px;font-weight:normal;color:#727272;letter-spacing:-0.220px;">Sales Outreach</div>
<div class="t" style="left:1072.40px;top:745.84px;font-size:14.6px;font-weight:normal;color:#727272;letter-spacing:-0.220px;">Email</div>
<div class="t" style="left:1247.96px;top:745.84px;font-size:14.6px;font-weight:normal;color:#727272;letter-spacing:-0.220px;">Content Download</div>
<div class="t" style="left:1423.74px;top:745.84px;font-size:14.6px;font-weight:normal;color:#727272;letter-spacing:-0.220px;">Website/Content</div>
<div class="t" style="left:1597.55px;top:745.84px;font-size:14.6px;font-weight:normal;color:#727272;letter-spacing:-0.220px;">Intent</div>
<div class="t" style="left:1772.80px;top:745.84px;font-size:14.6px;font-weight:normal;color:#727272;letter-spacing:-0.220px;">Referral Program</div>
<div class="t" style="left:196.90px;top:767.69px;font-size:14.6px;font-weight:normal;color:#727272;letter-spacing:-0.220px;">Demo Signup</div>
<div class="a" style="left:14px;top:853px;width:2015px;height:400px;border:1px solid #e2e2e2;border-radius:14px;background:#fff"></div>
<div class="t" style="left:30.81px;top:890.44px;font-size:19.6px;font-weight:bold;color:#222;letter-spacing:-0.374px;">Attribution by Campaign Type</div>
<svg class="a" style="left:307.97px;top:882.04px" width="15.93" height="15.93" viewBox="0 0 24 24"><path fill="#4a9e7a" d="M16 1H4c-1.1 0-2 .9-2 2v14h2V3h12V1zm-1 4l6 6v10c0 1.1-.9 2-2 2H7.99C6.89 23 6 22.1 6 21l.01-14c0-1.1.89-2 1.99-2h7zm-1 7h5.5L14 6.5V12z"/></svg>
<svg class="a" style="left:1405px;top:881.5px" width="20.5" height="20.5" viewBox="0 0 24 24"><path fill="#4a9e7a" d="M15.5 14h-.79l-.28-.27C15.41 12.59 16 11.11 16 9.5 16 5.91 13.09 3 9.5 3S3 5.91 3 9.5 5.91 16 9.5 16c1.61 0 3.09-.59 4.23-1.57l.27.28v.79l5 4.99L20.49 19l-4.99-5zm-6 0C7.01 14 5 11.99 5 9.5S7.01 5 9.5 5 14 7.01 14 9.5 11.99 14 9.5 14z"/></svg>
<div class="t" style="left:1437.41px;top:891.81px;font-size:17.4px;font-weight:normal;color:#aaaaaa;letter-spacing:-0.519px;">Search...</div>
<svg class="a" style="left:1668px;top:888.8px" width="15" height="10.4" viewBox="0 0 15 10.4"><rect x="0" y="0" width="3.9" height="10.3" rx="0.6" fill="#4a9e7a"/><rect x="5.6" y="0" width="3.8" height="10.3" rx="0.6" fill="#4a9e7a"/><rect x="11.1" y="0" width="3.8" height="10.3" rx="0.6" fill="#4a9e7a"/></svg>
<div class="t" style="left:1692.36px;top:894.79px;font-size:12.6px;font-weight:normal;color:#4a9e7a;letter-spacing:0.769px;-webkit-text-stroke:0.4px #4a9e7a;">COLUMNS</div>
<svg class="a" style="left:1792px;top:887px" width="20" height="14" viewBox="0 0 20 14"><rect x="1" y="1.1" width="17.9" height="1.8" rx="0.5" fill="#4a9e7a"/><rect x="4" y="6.1" width="11.9" height="1.8" rx="0.5" fill="#4a9e7a"/><rect x="8.1" y="11" width="3.8" height="1.8" rx="0.5" fill="#4a9e7a"/></svg>
<div class="t" style="left:1821.57px;top:894.79px;font-size:12.6px;font-weight:normal;color:#4a9e7a;letter-spacing:-0.183px;-webkit-text-stroke:0.4px #4a9e7a;">FILTERS</div>
<svg class="a" style="left:1904px;top:886px" width="16" height="16" viewBox="0 0 16 16"><path d="M2 7.8 V13.2 Q2 14 2.8 14 H13.2 Q14 14 14 13.2 V7.8" fill="none" stroke="#4a9e7a" stroke-width="1.8"/><path d="M8 1 V10" stroke="#4a9e7a" stroke-width="1.8"/><path d="M4.6 7 L8 10.4 L11.4 7" fill="none" stroke="#4a9e7a" stroke-width="1.8"/></svg>
<div class="t" style="left:1928.67px;top:894.79px;font-size:12.6px;font-weight:normal;color:#4a9e7a;letter-spacing:-0.177px;-webkit-text-stroke:0.4px #4a9e7a;">EXPORT</div>
<div class="t" style="left:40.77px;top:961.43px;font-size:16.5px;font-weight:normal;color:#262626;letter-spacing:-0.404px;">Group By Campaign Type</div>
<div class="t" style="left:700.95px;top:961.43px;font-size:16.5px;font-weight:normal;color:#262626;letter-spacing:-0.045px;">Pre-Opp Attribution</div>
<div class="t" style="left:900.55px;top:961.43px;font-size:16.5px;font-weight:normal;color:#262626;letter-spacing:0.034px;">Post-Opp Attribution</div>
<div class="t" style="left:1122.23px;top:961.43px;font-size:16.5px;font-weight:normal;color:#262626;letter-spacing:0.112px;">Total Attribution</div>
<div class="t" style="left:1321.52px;top:961.43px;font-size:16.5px;font-weight:normal;color:#262626;letter-spacing:-0.000px;">Opps Attributed</div>
<div class="t" style="left:1521.63px;top:961.43px;font-size:16.5px;font-weight:normal;color:#262626;letter-spacing:-0.015px;">Touches Attributed</div>
<div class="t" style="left:1720.86px;top:961.43px;font-size:16.5px;font-weight:normal;color:#262626;letter-spacing:-0.041px;">Companies</div>
<div class="t" style="left:1870.45px;top:961.43px;font-size:16.5px;font-weight:normal;color:#262626;letter-spacing:-0.058px;">People</div>
<svg class="a" style="left:1245px;top:954px" width="16" height="16" viewBox="0 0 16 16"><path d="M8 2 V13.2" stroke="#8a8a8a" stroke-width="1.8"/><path d="M2.6 8 L8 13.4 L13.4 8" fill="none" stroke="#8a8a8a" stroke-width="1.8"/></svg>
<div class="a" style="left:31px;top:989.1px;width:1981px;height:1px;background:#e0e0e0"></div>
<div class="a" style="left:31px;top:1041.9px;width:1981px;height:1px;background:#e0e0e0"></div>
<div class="a" style="left:31px;top:1093.6px;width:1981px;height:1px;background:#e0e0e0"></div>
<div class="a" style="left:31px;top:1145.7px;width:1981px;height:1px;background:#e0e0e0"></div>
<div class="t" style="left:40.43px;top:1016.12px;font-size:14.8px;font-weight:normal;color:#2a2a2a;letter-spacing:-0.290px;">Sales - Meeting</div>
<div class="t" style="left:702.14px;top:1016.12px;font-size:14.8px;font-weight:normal;color:#2a2a2a;letter-spacing:-0.470px;">$1,060,532</div>
<div class="t" style="left:901.74px;top:1016.12px;font-size:14.8px;font-weight:normal;color:#2a2a2a;letter-spacing:-0.470px;">$1,211,125</div>
<div class="t" style="left:1122.44px;top:1016.12px;font-size:14.8px;font-weight:normal;color:#2a2a2a;letter-spacing:-0.470px;">$2,271,657</div>
<div class="t" style="left:1321.17px;top:1016.12px;font-size:14.8px;font-weight:normal;color:#4a9e7a;letter-spacing:0.000px;">118</div>
<div class="t" style="left:1520.87px;top:1016.12px;font-size:14.8px;font-weight:normal;color:#4a9e7a;letter-spacing:0.000px;">166</div>
<div class="t" style="left:1720.57px;top:1016.12px;font-size:14.8px;font-weight:normal;color:#4a9e7a;letter-spacing:0.000px;">115</div>
<div class="t" style="left:1870.67px;top:1016.12px;font-size:14.8px;font-weight:normal;color:#4a9e7a;letter-spacing:0.000px;">166</div>
<div class="t" style="left:39.89px;top:1068.02px;font-size:14.8px;font-weight:normal;color:#2a2a2a;letter-spacing:-0.290px;">Drift Chat</div>
<div class="t" style="left:702.14px;top:1068.02px;font-size:14.8px;font-weight:normal;color:#2a2a2a;letter-spacing:-0.470px;">$893,910</div>
<div class="t" style="left:901.74px;top:1068.02px;font-size:14.8px;font-weight:normal;color:#2a2a2a;letter-spacing:-0.470px;">$338,971</div>
<div class="t" style="left:1122.44px;top:1068.02px;font-size:14.8px;font-weight:normal;color:#2a2a2a;letter-spacing:-0.470px;">$1,232,881</div>
<div class="t" style="left:1321.55px;top:1068.02px;font-size:14.8px;font-weight:normal;color:#4a9e7a;letter-spacing:0.000px;">69</div>
<div class="t" style="left:1521.24px;top:1068.02px;font-size:14.8px;font-weight:normal;color:#4a9e7a;letter-spacing:0.000px;">70</div>
<div class="t" style="left:1720.95px;top:1068.02px;font-size:14.8px;font-weight:normal;color:#4a9e7a;letter-spacing:0.000px;">68</div>
<div class="t" style="left:1871.05px;top:1068.02px;font-size:14.8px;font-weight:normal;color:#4a9e7a;letter-spacing:0.000px;">69</div>
<div class="t" style="left:40.35px;top:1119.92px;font-size:14.8px;font-weight:normal;color:#2a2a2a;letter-spacing:-0.290px;">Content (Gated)</div>
<div class="t" style="left:702.14px;top:1119.92px;font-size:14.8px;font-weight:normal;color:#2a2a2a;letter-spacing:-0.470px;">$978,298</div>
<div class="t" style="left:901.74px;top:1119.92px;font-size:14.8px;font-weight:normal;color:#2a2a2a;letter-spacing:-0.470px;">$244,951</div>
<div class="t" style="left:1122.44px;top:1119.92px;font-size:14.8px;font-weight:normal;color:#2a2a2a;letter-spacing:-0.470px;">$1,223,249</div>
<div class="t" style="left:1321.54px;top:1119.92px;font-size:14.8px;font-weight:normal;color:#4a9e7a;letter-spacing:0.000px;">76</div>
<div class="t" style="left:1521.36px;top:1119.92px;font-size:14.8px;font-weight:normal;color:#4a9e7a;letter-spacing:0.000px;">80</div>
<div class="t" style="left:1720.94px;top:1119.92px;font-size:14.8px;font-weight:normal;color:#4a9e7a;letter-spacing:0.000px;">75</div>
<div class="t" style="left:1871.04px;top:1119.92px;font-size:14.8px;font-weight:normal;color:#4a9e7a;letter-spacing:0.000px;">77</div>
<div class="t" style="left:40.40px;top:1171.82px;font-size:14.8px;font-weight:normal;color:#2a2a2a;letter-spacing:-0.290px;">Organic Search</div>
<div class="t" style="left:702.14px;top:1171.82px;font-size:14.8px;font-weight:normal;color:#2a2a2a;letter-spacing:-0.470px;">$912,447</div>
<div class="t" style="left:901.74px;top:1171.82px;font-size:14.8px;font-weight:normal;color:#2a2a2a;letter-spacing:-0.470px;">$197,300</div>
<div class="t" style="left:1122.44px;top:1171.82px;font-size:14.8px;font-weight:normal;color:#2a2a2a;letter-spacing:-0.470px;">$1,109,747</div>
<div class="t" style="left:1321.54px;top:1171.82px;font-size:14.8px;font-weight:normal;color:#4a9e7a;letter-spacing:0.000px;">71</div>
<div class="t" style="left:1521.24px;top:1171.82px;font-size:14.8px;font-weight:normal;color:#4a9e7a;letter-spacing:0.000px;">74</div>
<div class="t" style="left:1720.94px;top:1171.82px;font-size:14.8px;font-weight:normal;color:#4a9e7a;letter-spacing:0.000px;">70</div>
<div class="t" style="left:1871.04px;top:1171.82px;font-size:14.8px;font-weight:normal;color:#4a9e7a;letter-spacing:0.000px;">72</div>
<div class="a" style="left:2030px;top:651px;width:14px;height:35px;background:#4a9e7a"></div>
<svg class="a" style="left:2030px;top:651px" width="14" height="35" viewBox="0 0 14 35"><rect x="4" y="7.2" width="10" height="3.1" fill="#fff"/><rect x="4" y="16.3" width="6" height="2.7" fill="#fff"/><rect x="10" y="13" width="3" height="9" fill="#fff"/><rect x="4" y="24.7" width="9" height="3.1" fill="#fff"/></svg>
<div class="a" style="left:0;top:1167px;width:2044px;height:1px;background:linear-gradient(90deg,#333 0,#333 200px,#5a0e3c 320px,#5a0e3c 100%)"></div>
</body></html>
